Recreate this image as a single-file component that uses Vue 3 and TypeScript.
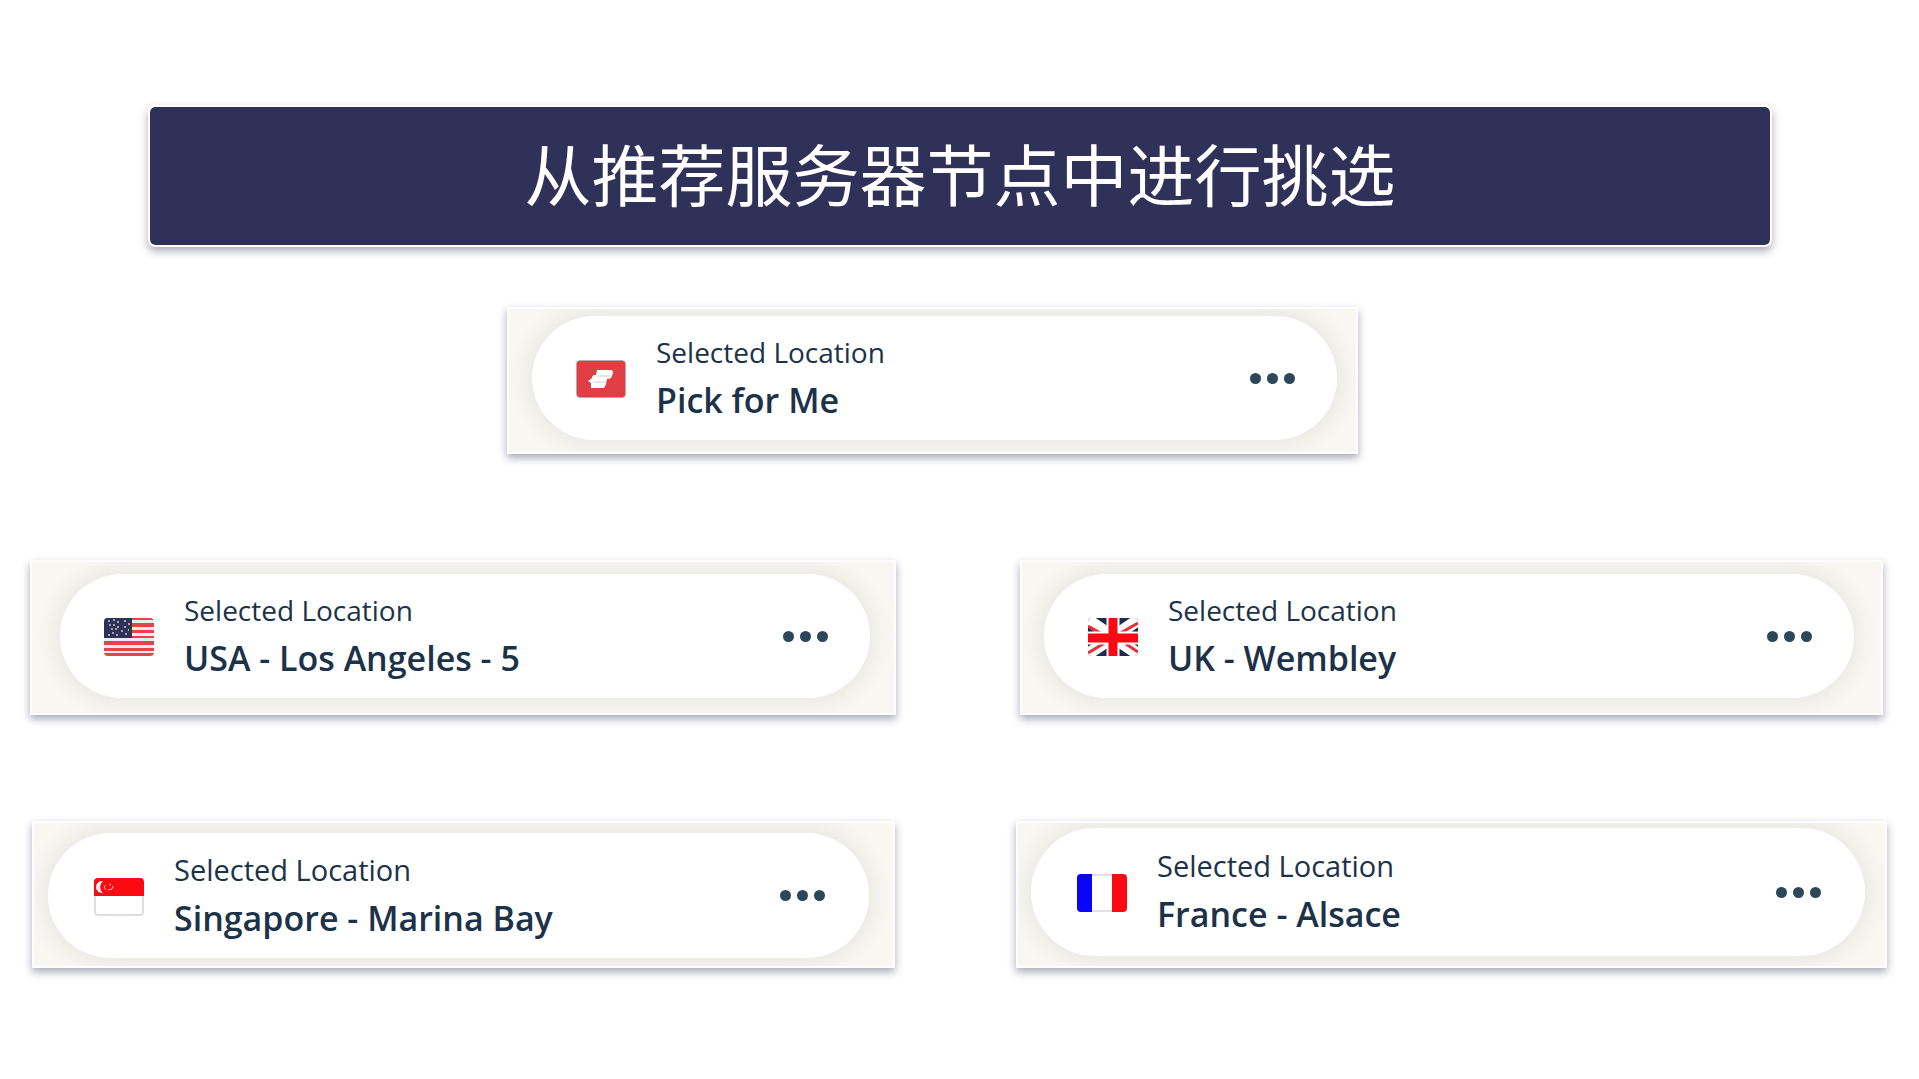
<script setup lang="ts">
type Flag = 'pick' | 'us' | 'uk' | 'sg' | 'fr'

interface Place {
  id: Flag
  name: string
}

const rows: { id: string; places: Place[] }[] = [
  { id: 'row-top', places: [{ id: 'pick', name: 'Pick for Me' }] },
  {
    id: 'row-middle',
    places: [
      { id: 'us', name: 'USA - Los Angeles - 5' },
      { id: 'uk', name: 'UK - Wembley' },
    ],
  },
  {
    id: 'row-bottom',
    places: [
      { id: 'sg', name: 'Singapore - Marina Bay' },
      { id: 'fr', name: 'France - Alsace' },
    ],
  },
]
</script>

<template>
  <main class="slide">
    <h1 class="banner">从推荐服务器节点中进行挑选</h1>

    <div v-for="row in rows" :key="row.id" class="row" :class="row.id">
      <section v-for="place in row.places" :key="place.id" class="card" :class="'card-' + place.id">
        <div class="pill">
          <svg class="flag" viewBox="0 0 50 38" aria-hidden="true">
            <defs>
              <clipPath :id="'clip-' + place.id">
                <rect width="50" height="38" rx="4" />
              </clipPath>
            </defs>
            <g :clip-path="`url(#clip-${place.id})`">
              <template v-if="place.id === 'pick'">
                <rect width="50" height="38" rx="4" fill="#b9a9ad" />
                <rect x="1" y="1" width="48" height="36" rx="3" fill="#e03d44" />
                <path
                  d="M21 10H35Q37 10 37 13L36 16Q35 19 32 19H31L30 24Q29 28 27 28H15V23L12 21L16 18Q16 15 19 15H20Z"
                  fill="#fff"
                />
                <path d="M21 16H34M17 22H29" stroke="#d9c9d0" stroke-width="1" />
              </template>
              <template v-else-if="place.id === 'us'">
                <rect width="50" height="38" fill="#eeeaf0" />
                <path
                  d="M0 0H50V2H0ZM0 5H50V9H0ZM0 12H50V15H0ZM0 18H50V20H0ZM0 23H50V27H0ZM0 30H50V33H0ZM0 35H50V38H0Z"
                  fill="#e8434a"
                />
                <rect width="28" height="20" fill="#303158" />
                <path
                  d="M4 3h2M9 2h2M13 4h2M20 3h2M24 6h2M5 7h2M9 7h2M13 9h2M20 9h2M7 11h2M11 11h2M4 17h2M8 15h2M12 17h2M17 13h2M21 16h2M24 12h1"
                  stroke="#9aa5b8"
                  stroke-width="2"
                />
              </template>
              <template v-else-if="place.id === 'uk'">
                <rect width="50" height="38" fill="#1d2b50" />
                <path d="M0 2L50 36M50 2L0 36" stroke="#fff" stroke-width="12" />
                <path d="M0 8L21 20M29 17L50 5M0 35L20 23M38 26L50 34" stroke="#ee2b37" stroke-width="3" />
                <path d="M25 0V38M0 20H50" stroke="#fff" stroke-width="13" />
                <path d="M25 0V38M0 20H50" stroke="#fa0b14" stroke-width="9" />
              </template>
              <template v-else-if="place.id === 'sg'">
                <rect x="1" y="1" width="48" height="36" rx="3" fill="#fff" stroke="#dcdce2" stroke-width="2" />
                <rect width="50" height="18" fill="#fa0b14" />
                <path d="M8 3A6 6 0 0 0 8 15L10 16A8 8 0 0 1 9 3Z" fill="#fff" />
                <path d="M12 7L10 9L12 12M15 6L17 7M19 8L18 11L14 12" fill="none" stroke="#fbb" stroke-width="1" />
              </template>
              <template v-else>
                <rect x="1" y="1" width="48" height="36" fill="#fff" stroke="#e0e0e6" stroke-width="2" />
                <rect width="15" height="38" fill="#0a04fa" />
                <rect x="35" width="15" height="38" fill="#fa0b14" />
              </template>
            </g>
          </svg>
          <div class="text">
            <p class="label">Selected Location</p>
            <h2 class="name">{{ place.name }}</h2>
          </div>
          <button class="more" type="button" :aria-label="'More options for ' + place.name">
            <span class="dot"></span>
            <span class="dot"></span>
            <span class="dot"></span>
          </button>
        </div>
      </section>
    </div>
  </main>
</template>

<style>
body {
  margin: 0;
  background: #fff;
}
</style>

<style scoped>
.slide {
  padding: 105px 0 112px;
  font-family: 'Open Sans', 'Noto Sans', 'Noto Sans CJK SC', sans-serif;
  color: #1c3249;
}

.banner {
  margin: 0 147px 60px 148px;
  padding-bottom: 8px;
  border: 2px solid #fff;
  border-radius: 7px;
  background: #303158;
  background-clip: padding-box;
  box-shadow: 0 4px 8px rgba(48, 49, 88, 0.42);
  color: #fff;
  font-family: 'Noto Sans CJK SC', sans-serif;
  font-size: 67px;
  font-weight: 400;
  line-height: 130px;
  text-align: center;
}

.row {
  display: grid;
}

.row-top {
  padding: 0 561px 0 507px;
  margin-bottom: 106px;
}

.row-middle {
  grid-template-columns: 866fr 863fr;
  column-gap: 124px;
  padding: 0 36px 0 30px;
  margin-bottom: 106px;
}

.row-bottom {
  grid-template-columns: 863fr 871fr;
  column-gap: 121px;
  padding: 0 32px;
}

.card {
  display: flex;
  overflow: hidden;
  border: 2px solid #fff;
  background: #f8f7f2;
  background-clip: padding-box;
  box-shadow: 0 4px 8px rgba(48, 49, 88, 0.42);
}

.card-pick {
  padding: 7px 19px 12px 23px;
}

.card-us {
  padding: 12px 24px 15px 28px;
}

.card-uk {
  padding: 12px 27px 15px 22px;
}

.card-sg {
  padding: 10px 24px 8px 14px;
}

.card-fr {
  padding: 5px 20px 10px 13px;
}

.pill {
  flex: 1;
  display: flex;
  align-items: center;
  gap: 30px;
  min-height: 124px;
  padding: 0 42px 0 44px;
  box-sizing: border-box;
  border-radius: 64px;
  background: #fff;
  box-shadow: 0 0 20px 6px #e9e8e3;
}

.row-bottom .pill {
  min-height: 125px;
  padding: 0 44px 0 46px;
}

.card-fr .pill {
  min-height: 128px;
}

.flag {
  flex: none;
  width: 50px;
  height: 38px;
  padding-top: 2px;
}

.text {
  flex: 1;
  padding-bottom: 4px;
}

.label,
.name {
  margin: 0;
  line-height: 48px;
  white-space: nowrap;
}

.label {
  font-size: 28px;
  font-weight: 400;
}

.row-bottom .label {
  font-size: 29px;
}

.name {
  font-size: 34px;
  font-weight: 600;
}

.more {
  display: flex;
  gap: 6px;
  padding: 0;
  border: 0;
  background: none;
}

.dot {
  width: 11px;
  height: 11px;
  border-radius: 50%;
  background: #2d475a;
}
</style>
